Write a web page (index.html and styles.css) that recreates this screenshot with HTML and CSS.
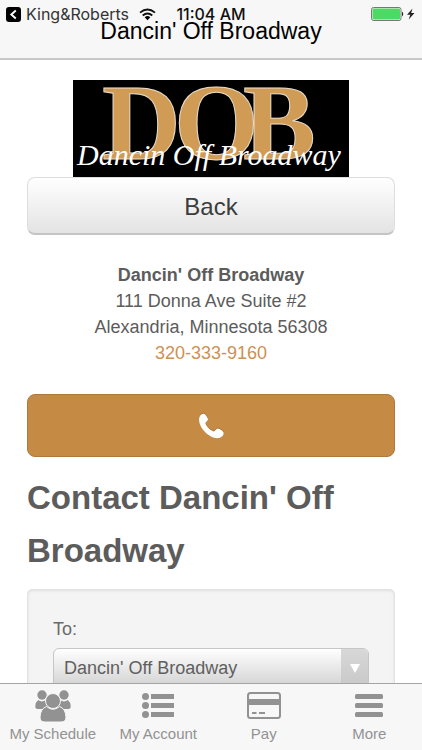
FILE: index.html
```html
<!DOCTYPE html>
<html lang="en">
<head>
  <meta charset="utf-8">
  <meta name="viewport" content="width=device-width, initial-scale=1">
  <title>Dancin' Off Broadway</title>
  <link rel="stylesheet" href="styles.css">
</head>
<body>
  <header class="topbar">
    <div class="status">
      <div class="status-left">
        <svg class="return-icon" viewBox="0 0 15 15" aria-hidden="true"><rect width="15" height="15" rx="3"/><path d="M9.8 3.5 5.3 7.5l4.5 4" fill="none" stroke="#fff" stroke-width="1.9"/></svg>
        <a class="return-link" href="#">King&amp;Roberts</a>
        <svg class="wifi-icon" viewBox="0 0 17 13" aria-hidden="true"><g fill="none" stroke="#111" stroke-width="1.8"><path d="M1 4.6Q8.500-1.600 16 4.600"/><path d="M3.700 7.500Q8.500 3.500 13.300 7.500"/></g><path d="M5.700 9.200Q8.500 7 11.300 9.200L8.500 12.200Z"/></svg>
      </div>
      <span class="time">11:04 AM</span>
      <div class="status-right">
        <svg class="battery-icon" viewBox="0 0 45 14" aria-hidden="true"><rect x=".5" y=".5" width="29.500" height="13" rx="2" fill="#f7f7f7" stroke="#777"/><rect x="1.500" y="1.500" width="27.500" height="11" rx="1" fill="#4cd964"/><path d="M31 4.500q2.500 2.500 0 5z" fill="#222"/><path d="M41.500 1.500 36 7.800h3.300L37.700 12.500 43.500 6h-3.300z" fill="#222"/></svg>
      </div>
    </div>
    <h1 class="title">Dancin' Off Broadway</h1>
  </header>

  <main class="content">
    <svg class="logo" viewBox="0 0 276 97" role="img" aria-label="Dancin Off Broadway">
      <rect width="276" height="97" fill="#000"/>
      <text class="logo-initials" x="29 101 170" y="79">DOB</text>
      <text class="logo-script" x="4" y="85">Dancin Off Broadway</text>
    </svg>
    <button class="button button-back" type="button">Back</button>
    <address class="address">
      <strong>Dancin' Off Broadway</strong>
      <span>111 Donna Ave Suite #2</span>
      <span>Alexandria, Minnesota 56308</span>
      <a href="tel:320-333-9160">320-333-9160</a>
    </address>
    <button class="button button-call" type="button" aria-label="Call">
      <svg class="phone-icon" viewBox="0 0 26 26" aria-hidden="true"><path d="M1.300 4.600C2 2 4 .3 6 .7c1.500.6 3.500 3.600 4 5.400.3 1.500-2.400 2.900-2.600 4.200.8 3.200 5.300 7.500 8.500 8.200 1.400-.3 2.300-3 4-2.900 1.900.3 5.100 2.400 5.700 4 .5 2.300-1.800 4.800-4.500 5.400C11.900 26.600-.8 13.900 1.300 4.600z" fill="#fff"/></svg>
    </button>
    <h2 class="heading">Contact Dancin' Off Broadway</h2>
    <form class="panel">
      <label class="label" for="recipient">To:</label>
      <div class="select-wrap">
        <select class="select" id="recipient"><option>Dancin' Off Broadway</option></select>
        <span class="select-arrow" aria-hidden="true"></span>
      </div>
    </form>
  </main>

  <nav class="tabs">
    <a class="tab" href="#">
      <svg class="tab-icon" viewBox="0 0 36 34" aria-hidden="true"><circle cx="7" cy="6" r="4.700"/><circle cx="29" cy="6" r="4.700"/><path d="M3.200 11q3.800 2.800 7.600 0l3 2v7H2q-2-.4-1.700-3Q.6 13 3.200 11zM32.800 11q-3.800 2.800-7.600 0l-3 2v7H34q2-.4 1.700-3Q35.400 13 32.800 11z"/><path d="M11.500 17.500Q18 23 24.500 17.500q6 2 6.500 10.500.2 5-5 5H10q-5.200 0-5-5 .5-8.500 6.500-10.500z" stroke="#f7f7f7"/><circle cx="18" cy="12" r="7.500" stroke="#f7f7f7"/></svg>
      <span>My Schedule</span>
    </a>
    <a class="tab" href="#">
      <svg class="tab-icon" viewBox="0 0 36 34" aria-hidden="true"><circle cx="5.500" cy="7.500" r="3.500"/><circle cx="5.500" cy="16.500" r="3.500"/><circle cx="5.500" cy="25.500" r="3.500"/><path d="M11 5h23v5H11zM11 14h23v5H11zM11 23h23v5H11z"/></svg>
      <span>My Account</span>
    </a>
    <a class="tab" href="#">
      <svg class="tab-icon" viewBox="0 0 36 34" aria-hidden="true"><rect x="2" y="4" width="32" height="25" rx="2.500" fill="none" stroke="#929292" stroke-width="2"/><path d="M2 10h32v6H2zM6 23h4.500v2H6zM13 23h6v2h-6z"/></svg>
      <span>Pay</span>
    </a>
    <a class="tab" href="#">
      <svg class="tab-icon" viewBox="0 0 36 34" aria-hidden="true"><rect x="4" y="5" width="28" height="5" rx="1.500"/><rect x="4" y="14" width="28" height="5" rx="1.500"/><rect x="4" y="23" width="28" height="5" rx="1.500"/></svg>
      <span>More</span>
    </a>
  </nav>
</body>
</html>
```

FILE: styles.css
```css
* {
  box-sizing: border-box;
}

body {
  margin: 0;
  height: 100vh;
  display: flex;
  flex-direction: column;
  overflow: hidden;
  background: #fff;
  color: #5c5c5c;
  font-family: "Liberation Sans", Arial, sans-serif;
  font-size: 18px;
}

a {
  text-decoration: none;
}

.topbar {
  flex: none;
  padding: 5px 6px 19px;
  background: #f7f7f7;
  border-bottom: 2px solid #c8c8c8;
  color: #111;
}

.status {
  display: grid;
  grid-template-columns: 1fr auto 1fr;
  align-items: center;
  height: 18px;
  font-family: Inter, sans-serif;
  font-size: 16px;
  line-height: 18px;
}

.status-left {
  display: flex;
  align-items: center;
  gap: 5px;
}

.return-icon {
  width: 15px;
  height: 15px;
}

.return-link {
  color: #333;
}

.wifi-icon {
  width: 17px;
  height: 13px;
  margin-left: 5px;
}

.time {
  font-weight: 500;
}

.status-right {
  display: flex;
  justify-content: flex-end;
}

.battery-icon {
  width: 45px;
  height: 14px;
}

.title {
  margin: 0;
  color: #000;
  font-size: 23px;
  font-weight: 400;
  line-height: 16px;
  text-align: center;
}

.content {
  flex: 1;
  min-height: 0;
  overflow: hidden;
  display: flex;
  flex-direction: column;
  padding: 20px 27px 0;
}

.content > * {
  flex: none;
}

.logo {
  width: 276px;
  height: 97px;
  align-self: center;
}

.logo-initials {
  fill: #d09b55;
  stroke: #e9dccb;
  stroke-width: 1px;
  font-family: "Liberation Serif", serif;
  font-size: 109px;
  font-weight: 700;
}

.logo-script {
  fill: #fff;
  font-family: "Liberation Serif", serif;
  font-size: 30px;
  font-style: italic;
}

.button {
  width: 100%;
  padding: 0;
  border-radius: 8px;
  font-family: inherit;
}

.button-back {
  height: 58px;
  padding-top: 3px;
  border: 1px solid #dedede;
  border-bottom: 2px solid #c4c4c4;
  background: linear-gradient(#fff, #e3e3e3);
  color: #3c3c3c;
  font-size: 24px;
}

.address {
  display: flex;
  flex-direction: column;
  align-items: center;
  padding: 27px 0 28px;
  font-style: normal;
  line-height: 26px;
}

.address a {
  color: #cc9153;
}

.button-call {
  display: flex;
  align-items: center;
  justify-content: center;
  height: 63px;
  border: 1px solid #ad7a3d;
  background: #c58b45;
}

.phone-icon {
  width: 26px;
  height: 26px;
  filter: drop-shadow(0 -1px 0 #a87538);
}

.heading {
  margin: 14px 0 12px;
  font-size: 33px;
  line-height: 53px;
}

.panel {
  height: 200px;
  padding: 26px 25px;
  border: 1px solid #e2e2e2;
  border-radius: 5px;
  background: #f4f4f4;
  box-shadow: inset 0 1px 3px #e0e0e0;
}

.label {
  display: block;
  margin-bottom: 6px;
  color: #6a6a6a;
  line-height: 26px;
}

.select-wrap {
  position: relative;
}

.select {
  width: 100%;
  height: 40px;
  padding: 0 36px 0 10px;
  appearance: none;
  border: 1px solid #c6c6c6;
  border-radius: 6px;
  background: linear-gradient(#fff, #d2d2d2);
  color: #5f5f5f;
  font-family: inherit;
  font-size: 18px;
}

.select-arrow {
  position: absolute;
  top: 1px;
  right: 1px;
  bottom: 1px;
  width: 27px;
  display: grid;
  place-items: center;
  border-radius: 0 5px 5px 0;
  background: linear-gradient(#d8d8d8, #c8c8c8);
  pointer-events: none;
}

.select-arrow::before {
  content: "";
  border: 5px solid transparent;
  border-top: 9px solid #fff;
  border-bottom: 0;
}

.tabs {
  flex: none;
  display: grid;
  grid-template-columns: repeat(4, 1fr);
  padding: 5px 0 7px;
  background: #f7f7f7;
  border-top: 1px solid #a4a4a4;
}

.tab {
  display: flex;
  flex-direction: column;
  align-items: center;
  gap: 2px;
  color: #929292;
  font-size: 15px;
  line-height: 18px;
  white-space: nowrap;
}

.tab-icon {
  width: 36px;
  height: 34px;
  fill: #929292;
}
```
